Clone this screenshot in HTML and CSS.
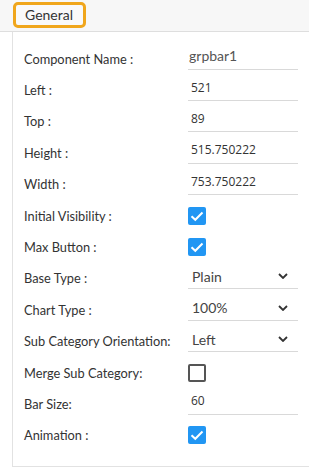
FILE: index.html
```html
<!DOCTYPE html>
<html>
<head>
<meta charset="utf-8">
<link rel="stylesheet" href="styles.css">
</head>
<body>
<div class="panel">
  <div class="tabs">
    <div class="tab">General</div>
  </div>
  <div class="content">
    <div class="row"><span class="label">Component Name :</span><div class="field"><span class="name-val">grpbar1</span></div></div>
    <div class="row"><span class="label">Left :</span><div class="field"><span class="val">521</span></div></div>
    <div class="row"><span class="label">Top :</span><div class="field"><span class="val">89</span></div></div>
    <div class="row"><span class="label">Height :</span><div class="field"><span class="val">515.750222</span></div></div>
    <div class="row"><span class="label">Width :</span><div class="field"><span class="val">753.750222</span></div></div>
    <div class="row"><span class="label">Initial Visibility :</span><div class="check on"><svg viewBox="0 0 18 18" width="18" height="18"><path d="M3.5 9.2 L7.3 12.8 L14.5 5.5" fill="none" stroke="#fff" stroke-width="2"/></svg></div></div>
    <div class="row"><span class="label">Max Button :</span><div class="check on"><svg viewBox="0 0 18 18" width="18" height="18"><path d="M3.5 9.2 L7.3 12.8 L14.5 5.5" fill="none" stroke="#fff" stroke-width="2"/></svg></div></div>
    <div class="row"><span class="label">Base Type :</span><div class="field select"><span class="sel">Plain</span><svg class="chev" viewBox="0 0 10 6" width="10" height="6"><path d="M1 1 L5 5 L9 1" fill="none" stroke="#333" stroke-width="1.8"/></svg></div></div>
    <div class="row"><span class="label">Chart Type :</span><div class="field select"><span class="sel">100%</span><svg class="chev" viewBox="0 0 10 6" width="10" height="6"><path d="M1 1 L5 5 L9 1" fill="none" stroke="#333" stroke-width="1.8"/></svg></div></div>
    <div class="row"><span class="label">Sub Category Orientation:</span><div class="field select"><span class="sel">Left</span><svg class="chev" viewBox="0 0 10 6" width="10" height="6"><path d="M1 1 L5 5 L9 1" fill="none" stroke="#333" stroke-width="1.8"/></svg></div></div>
    <div class="row"><span class="label">Merge Sub Category:</span><div class="check off"></div></div>
    <div class="row"><span class="label">Bar Size:</span><div class="field"><span class="val">60</span></div></div>
    <div class="row"><span class="label">Animation :</span><div class="check on"><svg viewBox="0 0 18 18" width="18" height="18"><path d="M3.5 9.2 L7.3 12.8 L14.5 5.5" fill="none" stroke="#fff" stroke-width="2"/></svg></div></div>
  </div>
</div>
</body>
</html>
```
FILE: styles.css
```css
html, body {
  margin: 0;
  padding: 0;
  background: #fff;
}
body {
  font-family: Lato, "Noto Sans", sans-serif;
  color: #333;
}
.panel {
  width: 309px;
  height: 470px;
  overflow: hidden;
}
.tabs {
  height: 32px;
  background: #f7f7f7;
  border-bottom: 1px solid #dedede;
  box-sizing: border-box;
  padding: 2px 0 0 13px;
}
.tab {
  display: inline-block;
  box-sizing: border-box;
  width: 73px;
  height: 26px;
  border: 3px solid #f0a61c;
  border-radius: 5px;
  padding: 0 0 0 9px;
  font-size: 14px;
  line-height: 20px;
  color: #333;
  background: #f9f9f9;
}
.content {
  margin-left: 12px;
  border-left: 1px solid #e2e2e2;
  border-bottom: 1px solid #e2e2e2;
  height: 435px;
  box-sizing: border-box;
  padding: 11px 0 0 11px;
}
.row {
  height: 31.4px;
  display: grid;
  grid-template-columns: 164px 110px;
  align-items: center;
}
.label {
  font-size: 12.8px;
  color: #333;
  white-space: nowrap;
}
.field {
  box-sizing: border-box;
  height: 24px;
  border-bottom: 1px solid #d9d9d9;
  display: flex;
  align-items: center;
  padding: 0 0 3px 3px;
  margin-top: -2px;
}
.val {
  font-family: "Open Sans", sans-serif;
  font-size: 12px;
  color: #333;
}
.name-val {
  font-family: Lato, sans-serif;
  font-size: 14px;
  color: #555;
  margin-left: -2px;
}
.select {
  justify-content: space-between;
  padding: 0 10px 1px 4px;
}
.sel {
  font-size: 14px;
  color: #444;
}
.chev {
  display: block;
}
.check {
  width: 18px;
  height: 18px;
  box-sizing: border-box;
  border-radius: 2px;
}
.check svg {
  display: block;
}
.check.on {
  background: #2196f3;
}
.check.off {
  border: 2px solid #555;
}
```
